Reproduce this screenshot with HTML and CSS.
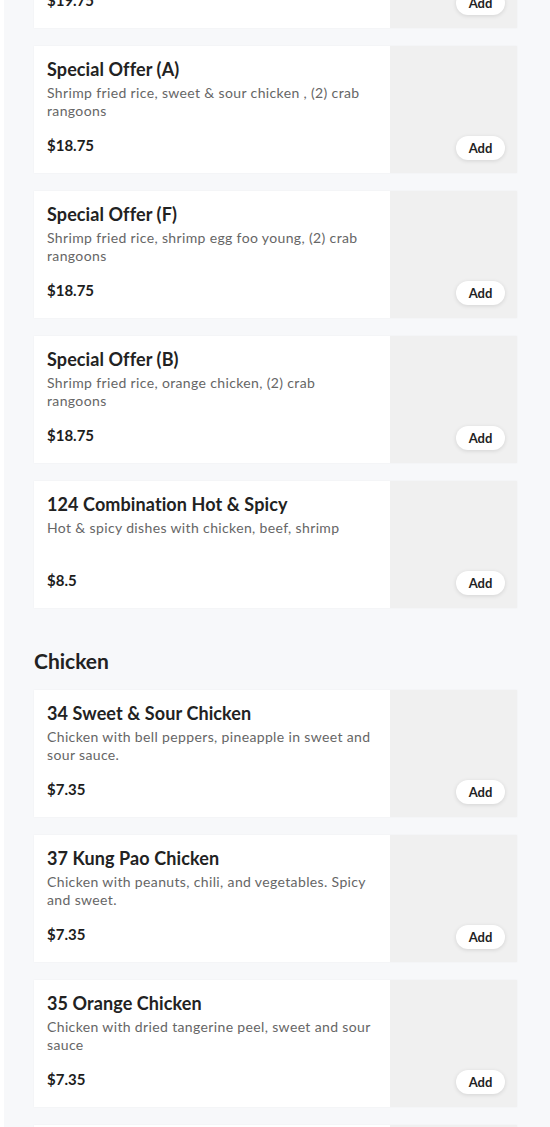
FILE: index.html
```html
<!DOCTYPE html>
<html>
<head>
<meta charset="utf-8">
<link rel="stylesheet" href="styles.css">
</head>
<body>
<div class="page">
  <div class="section first">
    <div class="card">
      <div class="info">
        <div class="title">Special Offer (C)</div>
        <div class="desc">Shrimp fried rice, general tso's chicken, (2) crab rangoons</div>
        <div class="price">$19.75</div>
      </div>
      <div class="pic"><button class="add">Add</button></div>
    </div>
    <div class="card">
      <div class="info">
        <div class="title">Special Offer (A)</div>
        <div class="desc">Shrimp fried rice, sweet &amp; sour chicken , (2) crab rangoons</div>
        <div class="price">$18.75</div>
      </div>
      <div class="pic"><button class="add">Add</button></div>
    </div>
    <div class="card">
      <div class="info">
        <div class="title">Special Offer (F)</div>
        <div class="desc">Shrimp fried rice, shrimp egg foo young, (2) crab rangoons</div>
        <div class="price">$18.75</div>
      </div>
      <div class="pic"><button class="add">Add</button></div>
    </div>
    <div class="card">
      <div class="info">
        <div class="title">Special Offer (B)</div>
        <div class="desc">Shrimp fried rice, orange chicken, (2) crab rangoons</div>
        <div class="price">$18.75</div>
      </div>
      <div class="pic"><button class="add">Add</button></div>
    </div>
    <div class="card">
      <div class="info">
        <div class="title">124 Combination Hot &amp; Spicy</div>
        <div class="desc">Hot &amp; spicy dishes with chicken, beef, shrimp</div>
        <div class="price">$8.5</div>
      </div>
      <div class="pic"><button class="add">Add</button></div>
    </div>
  </div>
  <div class="section">
    <h2 class="heading">Chicken</h2>
    <div class="card">
      <div class="info">
        <div class="title">34 Sweet &amp; Sour Chicken</div>
        <div class="desc">Chicken with bell peppers, pineapple in sweet and sour sauce.</div>
        <div class="price">$7.35</div>
      </div>
      <div class="pic"><button class="add">Add</button></div>
    </div>
    <div class="card">
      <div class="info">
        <div class="title">37 Kung Pao Chicken</div>
        <div class="desc">Chicken with peanuts, chili, and vegetables. Spicy and sweet.</div>
        <div class="price">$7.35</div>
      </div>
      <div class="pic"><button class="add">Add</button></div>
    </div>
    <div class="card">
      <div class="info">
        <div class="title">35 Orange Chicken</div>
        <div class="desc">Chicken with dried tangerine peel, sweet and sour sauce</div>
        <div class="price">$7.35</div>
      </div>
      <div class="pic"><button class="add">Add</button></div>
    </div>
    <div class="card">
      <div class="info">
        <div class="title">36 General Tso's Chicken</div>
        <div class="desc">Chicken with dried chili in sweet and spicy sauce</div>
        <div class="price">$7.35</div>
      </div>
      <div class="pic"><button class="add">Add</button></div>
    </div>
  </div>
</div>
</body>
</html>
```

FILE: styles.css
```css
html, body {
  margin: 0;
  padding: 0;
  background: #ffffff;
  overflow: hidden;
}
body {
  font-family: "Lato", "Liberation Sans", sans-serif;
  color: #222;
}
.page {
  margin-left: 4px;
  width: 560px;
  background: #f7f8fa;
  padding: 0 0 40px 30px;
  box-sizing: border-box;
  height: 1127px;
  overflow: hidden;
}
.section {
  display: flex;
  flex-direction: column;
  gap: 18px;
  width: 483px;
}
.section.first {
  margin-top: -99px;
}
.heading {
  margin: 41px 0 -1px 0;
  font-size: 21px;
  font-weight: 700;
  line-height: 24px;
  color: #222;
}
.card {
  display: flex;
  height: 127px;
  background: #fff;
  box-shadow: 0 0 2px rgba(0,0,0,0.04);
}
.info {
  width: 356px;
  box-sizing: border-box;
  padding: 11px 12px 0 13px;
  display: flex;
  flex-direction: column;
}
.title {
  font-size: 18px;
  font-weight: 700;
  line-height: 24px;
  color: #222;
  letter-spacing: 0.1px;
}
.desc {
  margin-top: 3px;
  font-size: 14px;
  line-height: 18px;
  color: #666;
  min-height: 36px;
  letter-spacing: 0.36px;
}
.price {
  margin-top: 15px;
  font-size: 15px;
  font-weight: 700;
  line-height: 20px;
  color: #1d1d1d;
}
.pic {
  flex: 1;
  background: #f0f0f0;
  display: flex;
  align-items: flex-end;
  justify-content: flex-end;
  padding: 0 12px 13px 0;
}
.add {
  width: 49px;
  height: 24px;
  border: none;
  border-radius: 12px;
  background: #fff;
  box-shadow: 0 1px 4px rgba(0,0,0,0.12);
  font-family: "Lato", "Liberation Sans", sans-serif;
  font-size: 13px;
  font-weight: 700;
  color: #222;
  padding: 0;
}
```
